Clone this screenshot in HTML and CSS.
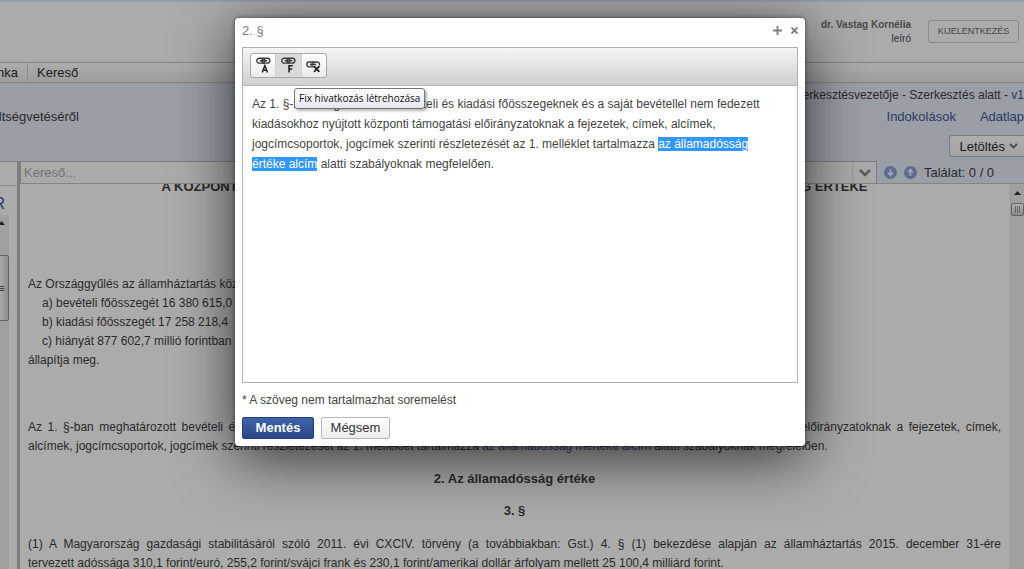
FILE: index.html
```
<!DOCTYPE html>
<html lang="hu">
<head>
<meta charset="utf-8">
<title>2. § szerkesztése</title>
<link rel="stylesheet" href="styles.css">
</head>
<body>
<div class="app">
  <header class="header">
    <div class="user"><strong>dr. Vastag Kornélia</strong><span>leíró</span></div>
    <button class="logout" type="button">KIJELENTKEZÉS</button>
  </header>
  <nav class="nav">
    <a class="nav-cut" href="#">nka</a>
    <a href="#">Kereső</a>
  </nav>
  <section class="info">
    <p class="status">szerkesztésvezetője - Szerkesztés alatt - <a href="#">v1</a></p>
    <div class="info-row">
      <p class="law">öltségvetéséről</p>
      <div class="tabs"><a href="#">Indokolások</a><a href="#">Adatlap</a></div>
    </div>
    <button class="download" type="button">Letöltés
      <svg width="9" height="6" viewBox="0 0 9 6"><path d="M1 1l3.500 3.500L8 1" fill="none" stroke="#4c4c4c" stroke-width="1.800"/></svg>
    </button>
  </section>
  <div class="workspace">
    <aside class="side">
      <div class="side-title">R</div>
      <div class="side-scroll">
        <svg class="arrow" width="7" height="4" viewBox="0 0 7 4"><path d="M0 4L3.500 0 7 4z" fill="#222"/></svg>
        <div class="side-thumb"><i></i><i></i><i></i></div>
      </div>
    </aside>
    <main class="main">
      <div class="search">
        <div class="search-box">
          <input type="text" placeholder="Kereső..." aria-label="Kereső">
          <button type="button" aria-label="Lista">
            <svg width="12" height="8" viewBox="0 0 12 8"><path d="M1 1l5 5 5-5" fill="none" stroke="#5b5b5b" stroke-width="2.500"/></svg>
          </button>
        </div>
        <button class="round" type="button" aria-label="Következő"><svg width="13" height="13" viewBox="0 0 13 13"><circle cx="6.500" cy="6.500" r="6.500" fill="#5f6b8f"/><path d="M6.500 3v6M4 6.500l2.500 3L9 6.500" fill="none" stroke="#a3a9b9" stroke-width="1.500"/></svg></button>
        <button class="round" type="button" aria-label="Előző"><svg width="13" height="13" viewBox="0 0 13 13"><circle cx="6.500" cy="6.500" r="6.500" fill="#5f6b8f"/><path d="M6.500 10V4M4 6.500l2.500-3L9 6.500" fill="none" stroke="#a3a9b9" stroke-width="1.500"/></svg></button>
        <span class="hits">Találat: 0 / 0</span>
      </div>
      <div class="doc-wrap">
        <article class="doc">
          <h2 class="chapter">A KÖZPONTI ALRENDSZER BEVÉTELI, KIADÁSI FŐÖSSZEGE, A HIÁNY MÉRTÉKE, AZ ÁLLAMADÓSSÁG ÉRTÉKE</h2>
          <p>Az Országgyűlés az államháztartás központi</p>
          <p class="item">a) bevételi főösszegét 16 380 615,0</p>
          <p class="item">b) kiadási főösszegét 17 258 218,4</p>
          <p class="item">c) hiányát 877 602,7 millió forintban</p>
          <p>állapítja meg.</p>
          <p class="para">Az 1. §-ban meghatározott bevételi és kiadási főösszegeknek és a saját bevétellel nem fedezett kiadásokhoz nyújtott központi támogatási előirányzatoknak a fejezetek, címek, alcímek, jogcímcsoportok, jogcímek szerinti részletezését az 1. melléklet tartalmazza <a href="#">az államadósság mértéke alcím</a> alatti szabályoknak megfelelően.</p>
          <h3>2. Az államadósság értéke</h3>
          <h3>3. §</h3>
          <p class="just"><span class="full-line">(1) A Magyarország gazdasági stabilitásáról szóló 2011. évi CXCIV. törvény (a továbbiakban: Gst.) 4. § (1) bekezdése alapján az államháztartás 2015. december 31-ére</span> tervezett adóssága 310,1 forint/euró, 255,2 forint/svájci frank és 230,1 forint/amerikai dollár árfolyam mellett 25 100,4 milliárd forint.</p>
        </article>
        <div class="scroll">
          <svg width="7" height="4" viewBox="0 0 7 4"><path d="M0 4L3.500 0 7 4z" fill="#222"/></svg>
          <div class="thumb"><i></i><i></i><i></i></div>
        </div>
      </div>
    </main>
  </div>
</div>

<div class="modal" role="dialog" aria-labelledby="modal-title">
  <div class="modal-head">
    <h1 id="modal-title">2. §</h1>
    <button type="button" aria-label="Nagyítás"><svg width="9" height="9" viewBox="0 0 9 9"><path d="M4.500 0v9M0 4.500h9" stroke="#7d7d7d" stroke-width="1.800"/></svg></button>
    <button type="button" aria-label="Bezárás"><svg width="7" height="7" viewBox="0 0 7 7"><path d="M.5.5l6 6M6.500.5l-6 6" stroke="#7d7d7d" stroke-width="1.800"/></svg></button>
  </div>
  <div class="editor">
    <div class="toolbar">
      <div class="tools">
        <button type="button" aria-label="Automatikus hivatkozás"><svg width="15" height="17" viewBox="0 0 14 16"><g fill="none" stroke="#3c3c3c" stroke-width="1.300"><rect x=".7" y="1.200" width="7.500" height="4.600" rx="2.300"/><rect x="5.500" y="1.200" width="7.500" height="4.600" rx="2.300"/><path d="M3.500 3.500h7"/></g><path d="M5.800 14.500L8.300 8l2.500 6.500M6.700 12.500h3.300" fill="none" stroke="#222" stroke-width="1.400"/></svg></button>
        <button class="on" type="button" aria-label="Fix hivatkozás létrehozása"><svg width="15" height="17" viewBox="0 0 14 16"><g fill="none" stroke="#3c3c3c" stroke-width="1.300"><rect x=".7" y="1.200" width="7.500" height="4.600" rx="2.300"/><rect x="5.500" y="1.200" width="7.500" height="4.600" rx="2.300"/><path d="M3.500 3.500h7"/></g><path d="M7.500 14.500V8.300h3.500M7.500 11.300h3" fill="none" stroke="#222" stroke-width="1.500"/></svg></button>
        <button type="button" aria-label="Hivatkozás törlése"><svg width="15" height="17" viewBox="0 0 14 16"><g fill="none" stroke="#3c3c3c" stroke-width="1.300"><path d="M7.500 9.300H3a2.300 2.300 0 0 1 0-4.600h3.200a2.300 2.300 0 0 1 2 1.300"/><path d="M6 8.500a2.300 2.300 0 0 1 1.500-3.800h3a2.300 2.300 0 0 1 2 3.300M3.500 7h6"/></g><path d="M7.500 8.500l5 5.500M12.500 8.500l-5 5.500" stroke="#222" stroke-width="1.700"/></svg></button>
      </div>
      <div class="tooltip" role="tooltip">Fix hivatkozás létrehozása</div>
    </div>
    <div class="editor-text" contenteditable="true" spellcheck="false">Az 1. §-ban meghatározott bevételi és kiadási főösszegeknek és a saját bevétellel nem fedezett kiadásokhoz nyújtott központi támogatási előirányzatoknak a fejezetek, címek, alcímek, jogcímcsoportok, jogcímek szerinti részletezését az 1. melléklet tartalmazza <span class="selected">az államadósság értéke alcím</span> alatti szabályoknak megfelelően.</div>
  </div>
  <p class="note">* A szöveg nem tartalmazhat soremelést</p>
  <div class="actions">
    <button class="save" type="button">Mentés</button>
    <button class="cancel" type="button">Mégsem</button>
  </div>
</div>
</body>
</html>
```
FILE: styles.css
```
* { box-sizing: border-box; }
html, body { height: 100%; margin: 0; }
body {
  overflow: hidden;
  font: 13px/19px "Liberation Sans", Arial, sans-serif;
  color: #2a2a2a;
  background: #ababab;
}
h1, h2, h3, p { margin: 0; font-size: inherit; }
button, input { font: inherit; color: inherit; margin: 0; padding: 0; border: 0; background: none; }
a { color: #2b3a66; text-decoration: none; }
svg { display: block; }

.app { display: flex; flex-direction: column; height: 100vh; overflow: hidden; }

.header {
  display: flex;
  justify-content: flex-end;
  gap: 17px;
  height: 62px;
  padding: 16px 5px 0 0;
  border-top: 2px solid #959daa;
  flex: none;
}
.user { display: flex; flex-direction: column; font-size: 10px; line-height: 14px; text-align: right; color: #4a4a4a; }
.user span { color: #2a2f3d; }
.logout { width: 91px; height: 23px; margin-top: 2px; font-size: 9px; line-height: 21px; color: #444; border: 1px solid #8a8a8a; border-radius: 3px; white-space: nowrap; }

.nav {
  display: flex;
  flex: none;
  height: 21px;
  border: solid #858585;
  border-width: 1px 0;
  background: linear-gradient(#adadad, #9d9d9d);
}
.nav a { color: #1a1a1a; padding: 0 9px; line-height: 19px; }
.nav .nav-cut { display: flex; justify-content: flex-end; width: 28px; padding-left: 0; border-right: 1px solid #8d8d8d; overflow: hidden; }

.info {
  flex: none;
  display: flex;
  flex-direction: column;
  height: 78px;
  background: #9a9ea7;
}
.status { align-self: flex-end; padding-top: 2px; font-size: 12px; line-height: 20px; white-space: nowrap; }
.info-row { display: flex; justify-content: space-between; line-height: 20px; padding-top: 2px; }
.law { display: flex; justify-content: flex-end; width: 79px; overflow: hidden; }
.tabs { display: flex; gap: 24px; }
.download {
  display: flex;
  align-self: flex-end;
  align-items: center;
  gap: 4px;
  height: 22px;
  margin-top: 8px;
  padding: 0 6px 0 9px;
  color: #1a1a1a;
  border: 1px solid #7e7e7e;
  border-right: 0;
  border-radius: 3px 0 0 3px;
  background: linear-gradient(#aeaeae, #a2a2a2);
}

.workspace { display: flex; flex: 1; min-height: 0; }
.side { width: 20px; flex: none; display: flex; flex-direction: column; border-top: 1px solid #858585; border-right: 3px solid #7d7d7d; }
.side-title { height: 30px; margin-top: 23px; padding: 8px 12px 0 0; border-top: 1px solid #8e8e8e; display: flex; justify-content: flex-end; font-size: 16px; line-height: 20px; color: #2b3a66; overflow: hidden; }
.side-scroll { flex: 1; width: 9px; background: #a0a0a0; padding-top: 6px; }
.side .arrow { margin-left: -2px; }
.side-thumb { display: flex; flex-direction: column; justify-content: center; gap: 1px; height: 66px; margin-top: 30px; border: 1px solid #626262; border-left: 0; border-radius: 0 2px 2px 0; background: linear-gradient(90deg, #aaa, #8c8c8c); }
.side-thumb i { width: 4px; height: 1px; background: #444; }

.main { flex: 1; min-width: 0; display: flex; flex-direction: column; }
.search { display: flex; align-items: center; flex: none; height: 23px; background: #9a9ea7; border-bottom: 1px solid #858585; }
.search-box { display: flex; width: 857px; height: 22px; border: 1px solid #7e7e7e; border-bottom: 0; background: #aaa; }
.search-box input { flex: 1; padding: 0 3px; outline: 0; }
.search-box input::placeholder { color: #747474; opacity: 1; }
.search-box button { width: 24px; display: grid; place-items: center; border-left: 1px solid #999; }
.round { margin-left: 7px; }
.hits { margin-left: 7px; white-space: nowrap; }

.doc-wrap { display: flex; flex: 1; min-height: 0; }
.doc { flex: 1; padding: 0 9px 0 8px; overflow: hidden; min-width: 0; }
.doc a { color: #2b3a66; }
.doc p { font-size: 12px; }
.chapter { margin: -7px 0 79px; text-align: center; white-space: nowrap; }
.item { padding-left: 14px; }
.para, .just { text-align: justify; }
.para { margin-top: 48px; }
.doc h3 { margin-top: 13px; text-align: center; }
.just { margin-top: 15px; }
.full-line { display: block; text-align-last: justify; }
.scroll { display: flex; flex-direction: column; align-items: center; width: 14px; padding-top: 7px; border-left: 1px solid #989898; background: #a0a0a0; }
.thumb { display: flex; justify-content: center; align-items: center; gap: 1px; align-self: stretch; height: 13px; margin-top: 8px; border: 1px solid #626262; border-radius: 2px; background: linear-gradient(#b0b0b0, #8c8c8c); }
.thumb i { width: 1px; height: 7px; background: #666; }

.modal {
  position: absolute;
  top: 18px;
  left: 235px;
  width: 570px;
  padding: 0 7px 7px;
  color: #444;
  background: #fff;
  border-radius: 4px;
  box-shadow: 0 12px 60px rgba(0, 0, 0, .7), 0 0 4px rgba(0, 0, 0, .5);
}
.modal-head { display: flex; align-items: center; gap: 9px; height: 29px; padding-bottom: 5px; }
.modal-head h1 { flex: 1; font-weight: normal; color: #7d7d7d; }
.editor { border: 1px solid #b0b0b0; }
.toolbar { position: relative; padding: 5px 7px 7px; border-bottom: 1px solid #b5b5b5; background: linear-gradient(#f5f5f5, #cfcfcf); }
.tools { display: flex; width: 77px; height: 25px; border: 1px solid #a8a8a8; border-radius: 3px; background: linear-gradient(#fff, #ebebeb); overflow: hidden; }
.tools button { flex: 1; display: grid; place-items: center; }
.tools button + button { border-left: 1px solid #d0d0d0; }
.tools .on { background: #dadada; }
.tooltip { position: absolute; left: 51px; top: 40px; padding: 0 4px; border: 1px solid #767676; border-radius: 3px; background: linear-gradient(#fff, #e4e5f0); box-shadow: 2px 2px 3px rgba(0, 0, 0, .3); color: #111; font: 10px/19px "Open Sans", "Noto Sans", sans-serif; white-space: nowrap; }
.editor-text { min-height: 296px; padding: 8px 18px 9px 9px; font-size: 12px; line-height: 20px; outline: 0; }
.selected { color: #fff; background: #3297fd; }
.note { padding: 8px 0 7px; font-size: 12px; }
.actions { display: flex; gap: 7px; }
.actions button { height: 22px; border-radius: 2px; line-height: 20px; }
.save { width: 72px; font-weight: bold; color: #fff; border: 1px solid #233e7d; background: linear-gradient(#4063ac, #2a4688); }
.cancel { width: 69px; color: #333; border: 1px solid #b8b8b8; background: linear-gradient(#fff, #ececec); }
```
